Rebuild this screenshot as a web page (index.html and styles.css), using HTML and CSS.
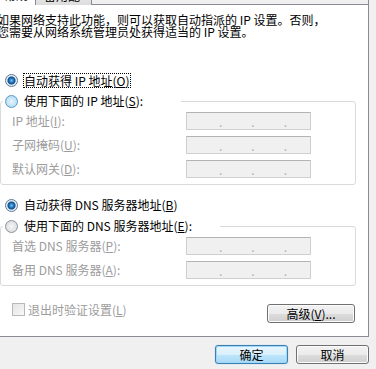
FILE: index.html
```html
<!DOCTYPE html>
<html lang="zh-CN">
<head>
    <meta charset="UTF-8">
    <title>Internet 协议版本 4 (TCP/IPv4) 属性</title>
    <link rel="stylesheet" href="styles.css">
</head>
<body>
    <div class="dialog">
        <!-- 选项卡 -->
        <div class="tabs">
            <div class="tab active">常规</div>
            <div class="tab">备用配置</div>
            <div class="tab-fill"></div>
        </div>

        <div class="panel">
            <p class="intro">如果网络支持此功能，则可以获取自动指派的 IP 设置。否则，<br>您需要从网络系统管理员处获得适当的 IP 设置。</p>

            <label class="option first">
                <input type="radio" class="radio" name="ip" checked>
                <span class="focus">自动获得 IP 地址(<u>O</u>)</span>
            </label>

            <fieldset class="group">
                <legend class="legend ip-legend">
                    <label class="option">
                        <input type="radio" class="radio hot" name="ip">
                        <span>使用下面的 IP 地址(<u>S</u>):</span>
                    </label>
                </legend>
                <div class="fields">
                    <span class="lbl">IP 地址(<u>I</u>):</span>
                    <div class="ipbox"><span>.</span><span>.</span><span>.</span></div>
                    <span class="lbl">子网掩码(<u>U</u>):</span>
                    <div class="ipbox"><span>.</span><span>.</span><span>.</span></div>
                    <span class="lbl">默认网关(<u>D</u>):</span>
                    <div class="ipbox"><span>.</span><span>.</span><span>.</span></div>
                </div>
            </fieldset>

            <label class="option dns-first">
                <input type="radio" class="radio" name="dns" checked>
                <span>自动获得 DNS 服务器地址(<u>B</u>)</span>
            </label>

            <fieldset class="group">
                <legend class="legend dns-legend">
                    <label class="option">
                        <input type="radio" class="radio" name="dns">
                        <span>使用下面的 DNS 服务器地址(<u>E</u>):</span>
                    </label>
                </legend>
                <div class="fields">
                    <span class="lbl">首选 DNS 服务器(<u>P</u>):</span>
                    <div class="ipbox"><span>.</span><span>.</span><span>.</span></div>
                    <span class="lbl">备用 DNS 服务器(<u>A</u>):</span>
                    <div class="ipbox"><span>.</span><span>.</span><span>.</span></div>
                </div>
            </fieldset>

            <div class="panel-foot">
                <label class="check">
                    <input type="checkbox" class="checkbox" disabled>
                    <span>退出时验证设置(<u>L</u>)</span>
                </label>
                <button class="btn advanced">高级(<u>V</u>)...</button>
            </div>
        </div>

        <!-- 确定 / 取消 -->
        <div class="actions">
            <button class="btn default">确定</button>
            <button class="btn">取消</button>
        </div>
    </div>
</body>
</html>
```

FILE: styles.css
```css
body {
    margin: 0;
    background: #f0f0f0;
    font-family: "Noto Sans CJK SC", sans-serif;
    font-size: 12px;
    color: #000;
    overflow: hidden;
}

.dialog {
    width: 376px;
    height: 369px;
}

u {
    text-decoration: underline;
    text-underline-offset: 1px;
}

/* 选项卡 */
.tabs {
    display: flex;
    align-items: flex-end;
    width: 369px;
    height: 5px;
    overflow: hidden;
}

.tab {
    box-sizing: border-box;
    height: 19px;
    line-height: 18px;
    padding-left: 8px;
    flex: none;
    width: 57px;
    border: 1px solid #898c95;
    border-bottom: none;
    background: linear-gradient(#f2f2f2, #dcdcdc);
    border-radius: 2px 2px 0 0;
}

.tab.active {
    width: 35px;
    border: none;
    background: #fff;
    padding-left: 4px;
}

.tab-fill {
    flex: 1;
    height: 5px;
    box-sizing: border-box;
    border-bottom: 1px solid #898c95;
    border-right: 1px solid #898c95;
}

/* 面板 */
.panel {
    box-sizing: border-box;
    width: 369px;
    background: #fff;
    border-right: 1px solid #898c95;
    border-bottom: 1px solid #898c95;
    padding: 9px 13px 13px 0;
}

.intro {
    margin: 0 0 0 -3px;
    line-height: 12px;
    white-space: nowrap;
}

.option {
    display: flex;
    align-items: center;
    height: 16px;
    line-height: 16px;
    white-space: nowrap;
}

.option.first {
    margin: 34px 0 0 5px;
}

.option.dns-first {
    margin: 12px 0 0 5px;
}

.focus {
    outline: 1px dotted #000;
    outline-offset: 0;
    line-height: 13px;
}

.radio {
    appearance: none;
    box-sizing: border-box;
    width: 13px;
    height: 13px;
    margin: 0 6px 0 0;
    border: 1px solid #8a96a2;
    border-radius: 50%;
    background: radial-gradient(circle, #f6f6f6 0, #e2e2e2 60%, #c8c8c8 100%);
}

.radio.hot {
    border-color: #5b9ac6;
    background: radial-gradient(circle, #e8f6fd 0, #bfe2f6 60%, #9ccbe8 100%);
}

.radio:checked {
    border-color: #5b7a95;
    background: radial-gradient(circle, #6ec1f0 0, #2c7cc4 2px, #0d4b8a 3.5px, #cfe7f5 4.5px, #eeeeee 5px, #d0d0d0 100%);
}

/* 分组框 */
.group {
    box-sizing: border-box;
    width: 356px;
    margin: 5px 0 0;
    padding: 3px 0 6px;
    border: 1px solid #dadada;
    border-radius: 3px;
    min-width: 0;
}

.legend {
    box-sizing: border-box;
    margin-left: 2px;
    padding: 0 2px;
}

.ip-legend {
    width: 178px;
}

.dns-legend {
    width: 217px;
}

.fields {
    display: grid;
    grid-template-columns: 174px 125px;
    row-gap: 6px;
    padding-left: 11px;
    align-items: center;
}

.lbl {
    color: #9c9c9c;
    line-height: 18px;
    white-space: nowrap;
}

.ipbox {
    box-sizing: border-box;
    height: 18px;
    display: flex;
    gap: 29px;
    padding-left: 32px;
    border: 1px solid #cfcfcf;
    border-top-color: #b4b4b4;
    background: #f0f0f0;
    color: #b0b0b0;
    line-height: 18px;
}

/* 底部 */
.panel-foot {
    display: flex;
    justify-content: space-between;
    align-items: flex-start;
    margin-top: 17px;
    padding-left: 12px;
}

.check {
    display: flex;
    align-items: center;
    height: 13px;
    color: #9c9c9c;
    white-space: nowrap;
}

.checkbox {
    appearance: none;
    box-sizing: border-box;
    width: 13px;
    height: 13px;
    margin: 0 3px 0 0;
    border: 1px solid #b8b8b8;
    background: linear-gradient(135deg, #e4e4e4, #f8f8f8);
}

.btn {
    box-sizing: border-box;
    width: 73px;
    height: 19px;
    padding: 0;
    font: inherit;
    line-height: 17px;
    color: #000;
    border: 1px solid #707070;
    border-radius: 3px;
    background: linear-gradient(#f2f2f2 0, #ebebeb 50%, #dddddd 51%, #cfcfcf 100%);
    box-shadow: inset 0 0 0 1px #fcfcfc;
}

.btn.advanced {
    width: 88px;
    margin-top: 1px;
}

.btn.default {
    border-color: #3c7fb1;
    background: linear-gradient(#eaf6fd 0, #d9f0fc 50%, #bee6fd 51%, #a7d9f5 100%);
    box-shadow: inset 0 0 0 1px #9fd8f7, 0 0 1px #6fb3e0;
}

.actions {
    display: flex;
    justify-content: flex-end;
    gap: 8px;
    margin-top: 8px;
    padding-right: 7px;
}
```
